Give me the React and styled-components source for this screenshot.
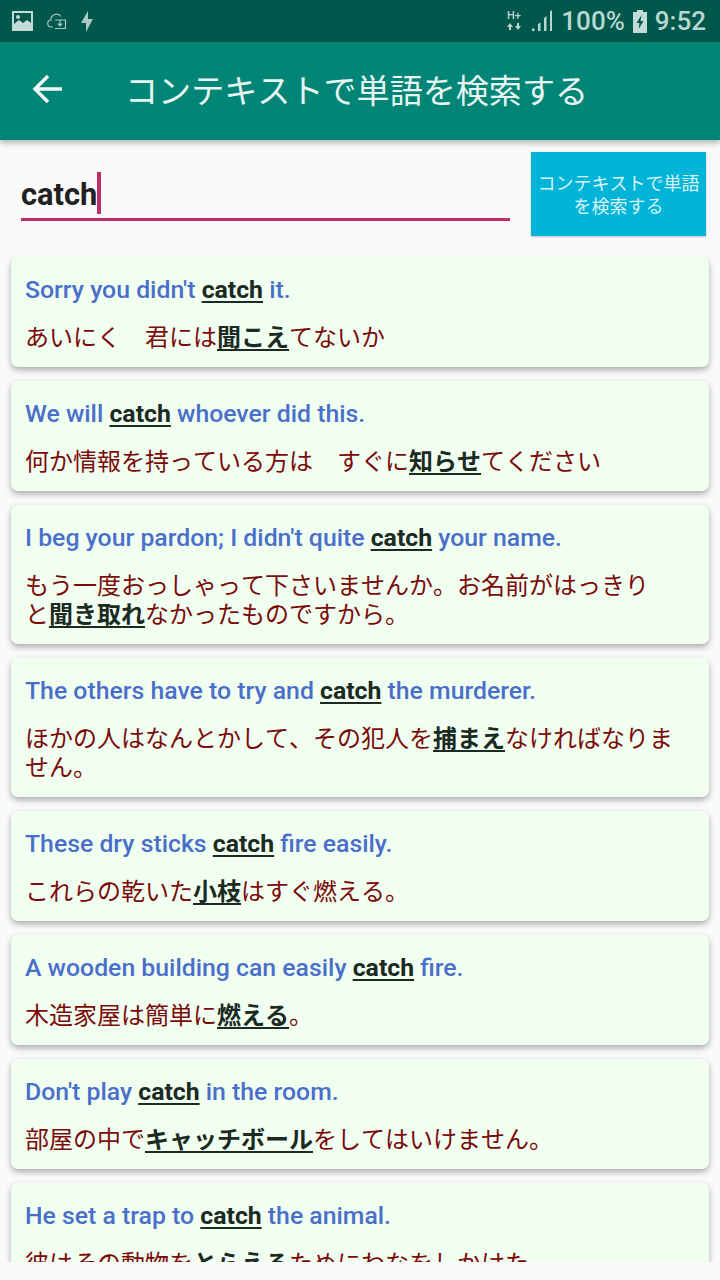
import React from 'react'
import styled, { createGlobalStyle } from 'styled-components'

const GlobalStyle = createGlobalStyle`
  html, body {
    margin: 0;
    padding: 0;
    background: #fafafa;
  }
  * {
    box-sizing: border-box;
  }
`

const Screen = styled.div`
  width: 720px;
  height: 1280px;
  display: flex;
  flex-direction: column;
  background: #fafafa;
  font-family: Roboto, "Noto Sans CJK JP", sans-serif;
  overflow: hidden;
`

const StatusBar = styled.div`
  height: 42px;
  flex: none;
  background: #00574b;
  display: flex;
  align-items: center;
  justify-content: space-between;
  padding: 0 14px 0 12px;
  color: #b9d6d0;
`

const StatusGroup = styled.div`
  display: flex;
  align-items: center;
  gap: ${({ gap }) => gap}px;
`

const StatusText = styled.span`
  font-size: 26px;
  font-weight: 500;
  line-height: 42px;
`

const AppBar = styled.div`
  height: 98px;
  flex: none;
  background: #008577;
  display: flex;
  align-items: center;
  padding: 0 0 4px 32px;
  box-shadow: 0 3px 6px rgba(0, 0, 0, 0.28);
  position: relative;
  z-index: 1;
`

const BackButton = styled.div`
  width: 32px;
  height: 32px;
  margin-right: 61px;
  display: flex;
`

const Title = styled.h1`
  margin: 0;
  font-size: 33.1px;
  font-weight: 400;
  font-kerning: none;
  color: #e8f5f2;
  white-space: nowrap;
`

const SearchRow = styled.div`
  flex: none;
  display: flex;
  align-items: flex-start;
  padding: 12px 14px 0 21px;
  height: 117px;
`

const SearchField = styled.div`
  width: 489px;
  height: 69px;
  border-bottom: 3.5px solid #bf2e66;
  display: flex;
  align-items: flex-start;
  padding-top: 20px;
  margin-right: 21px;
`

const SearchText = styled.span`
  font-size: 30.8px;
  font-weight: 700;
  line-height: 42px;
  margin-top: 2px;
  color: #212121;
`

const Caret = styled.span`
  width: 4px;
  height: 42px;
  background: #bf2e66;
`

const SearchButton = styled.div`
  width: 175px;
  height: 84px;
  background: #00b4d8;
  box-shadow: 0 1px 2px rgba(0, 0, 0, 0.25);
  color: #d9f3f8;
  font-size: 18px;
  font-kerning: none;
  line-height: 23px;
  text-align: center;
  display: flex;
  align-items: center;
  justify-content: center;
  padding: 2px 6px 0;
`

const List = styled.div`
  flex: 1;
  margin-bottom: 18px;
  padding: 0 11px;
  display: flex;
  flex-direction: column;
  gap: 14px;
  overflow: hidden;
`

const Card = styled.div`
  flex: none;
  background: #f1fff1;
  border-radius: 7px;
  padding: 19px 14px 17px;
  box-shadow: 0 3px 6px rgba(0, 0, 0, 0.32);
`

const English = styled.div`
  font-size: 24.8px;
  font-weight: 500;
  line-height: 28px;
  color: #4a6fca;
  margin-bottom: 17px;
  white-space: nowrap;
`

const Japanese = styled.div`
  font-family: "Noto Sans CJK JP", sans-serif;
  font-size: 24px;
  font-kerning: none;
  line-height: 29px;
  color: #7b0a0a;
  white-space: pre-wrap;
`

const Mark = styled.span`
  font-weight: 700;
  color: #1b2a22;
  text-decoration: underline;
  text-decoration-thickness: 2px;
  text-underline-offset: 3px;
`

const rows = [
  { en: ["Sorry you didn't ", ' it.'], ja: ['あいにく　君には', '聞こえ', 'てないか'] },
  { en: ['We will ', ' whoever did this.'], ja: ['何か情報を持っている方は　すぐに', '知らせ', 'てください'] },
  { en: ["I beg your pardon; I didn't quite ", ' your name.'], ja: ['もう一度おっしゃって下さいませんか。お名前がはっきり\nと', '聞き取れ', 'なかったものですから。'] },
  { en: ['The others have to try and ', ' the murderer.'], ja: ['ほかの人はなんとかして、その犯人を', '捕まえ', 'なければなりません。'] },
  { en: ['These dry sticks ', ' fire easily.'], ja: ['これらの乾いた', '小枝', 'はすぐ燃える。'] },
  { en: ['A wooden building can easily ', ' fire.'], ja: ['木造家屋は簡単に', '燃える', '。'] },
  { en: ["Don't play ", ' in the room.'], ja: ['部屋の中で', 'キャッチボール', 'をしてはいけません。'] },
  { en: ['He set a trap to ', ' the animal.'], ja: ['彼はその動物を', 'とらえる', 'ためにわなをしかけた'] },
]

const PictureIcon = () => (
  <svg width="22" height="20" viewBox="0 0 22 20">
    <path fill="#c3dcd7" fillRule="evenodd" d="M0 0h21v20H0zM2 2v11l5-4 4 3 4-3 4 3V2z" />
    <circle cx="6" cy="6" r="2" fill="#c3dcd7" />
  </svg>
)

const CloudIcon = () => (
  <svg width="20" height="18" viewBox="0 0 20 18" fill="none" stroke="#a9cbc4" strokeWidth="1.2">
    <path d="M6 15H4.5a3.5 3.5 0 0 1-.5-7A5.5 5.5 0 0 1 14 4.5" />
    <path d="M8 8h10.5v8.5H8" />
    <path d="M13 8v5.5M10.8 11.5l2.2 2.4 2.2-2.4" />
  </svg>
)

const BoltIcon = () => (
  <svg width="14" height="21" viewBox="0 0 14 21">
    <path fill="#a9cbc4" d="M8 0v8h5L6 21v-9H1z" />
  </svg>
)

const NetworkIcon = () => (
  <svg width="16" height="24" viewBox="0 0 16 24">
    <text x="0" y="10" fontFamily="Roboto" fontSize="11" fontWeight="500" fill="#b9d6d0">H+</text>
    <path fill="#b9d6d0" d="M3 14l3 4H4v3H2v-3H0zM11 21l-3-4h2v-3h2v3h2z" />
  </svg>
)

const SignalIcon = () => (
  <svg width="22" height="22" viewBox="0 0 22 22" fill="#b9d6d0">
    <path d="M1 18.5h2.5V21H1zM7 14l2.5-1.5V21H7zM13 8l2.5-2V21H13zM19 1.5l2-1.5V21h-2z" />
  </svg>
)

const BatteryIcon = () => (
  <svg width="14" height="23" viewBox="0 0 14 23">
    <path fill="#c3dcd7" d="M4 0h6v2h4v21H0V2h4z" />
    <path fill="#00574b" d="M8.5 5L3.5 13h3l-1 6 5-8h-3z" />
  </svg>
)

const BackArrow = () => (
  <svg width="32" height="32" viewBox="0 0 32 32" fill="none" stroke="#f1faf8" strokeWidth="3.4">
    <path d="M30 16H4M16 3L3 16l13 13" />
  </svg>
)

export default function App() {
  return (
    <Screen>
      <GlobalStyle />
      <StatusBar>
        <StatusGroup gap={13}>
          <PictureIcon />
          <CloudIcon />
          <BoltIcon />
        </StatusGroup>
        <StatusGroup gap={8}>
          <NetworkIcon />
          <SignalIcon />
          <StatusText>100%</StatusText>
          <BatteryIcon />
          <StatusText>9:52</StatusText>
        </StatusGroup>
      </StatusBar>
      <AppBar>
        <BackButton>
          <BackArrow />
        </BackButton>
        <Title>コンテキストで単語を検索する</Title>
      </AppBar>
      <SearchRow>
        <SearchField>
          <SearchText>catch</SearchText>
          <Caret />
        </SearchField>
        <SearchButton>コンテキストで単語を検索する</SearchButton>
      </SearchRow>
      <List>
        {rows.map((row) => (
          <Card key={row.en[0]}>
            <English>
              {row.en[0]}
              <Mark>catch</Mark>
              {row.en[1]}
            </English>
            <Japanese>
              {row.ja[0]}
              <Mark>{row.ja[1]}</Mark>
              {row.ja[2]}
            </Japanese>
          </Card>
        ))}
      </List>
    </Screen>
  )
}
